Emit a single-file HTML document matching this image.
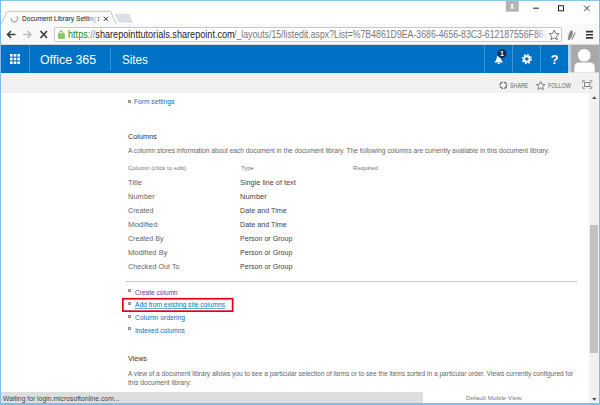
<!DOCTYPE html>
<html><head><meta charset="utf-8">
<style>
html,body{margin:0;padding:0;}
body{width:600px;height:405px;overflow:hidden;background:#fff;font-family:"Liberation Sans",sans-serif;position:relative;}
.abs{position:absolute;}
#toolbar{left:0;top:24px;width:600px;height:21px;background:#f9f9f9;}
#urlbox{left:53.500px;top:27px;width:508px;height:15px;background:#fff;border:1px solid #c8c8c8;border-radius:2px;box-sizing:border-box;}
#url{left:68px;top:28px;width:480px;overflow:hidden;font-size:10.5px;line-height:14px;color:#222;white-space:nowrap;}
#bluebar{left:0;top:45px;width:568px;height:27.5px;background:#0072c6;}
#ribbon{left:0;top:72.5px;width:600px;height:20px;background:#f1f1f1;}
.t{position:absolute;white-space:nowrap;transform-origin:0 50%;}
.bul{position:absolute;width:3.2px;height:3px;background:#e2e2e2;border:1px solid #8c8c8c;box-sizing:border-box;}
</style></head><body>
  <!-- tab strip -->
  <svg class="abs" style="left:0;top:0" width="600" height="25">
    <path d="M1,24.5 L6.500,12.300 Q7,11.300 8,11.300 L109.500,11.300 Q110.500,11.300 111,12.300 L116.500,24.500 L600,24.500 L600,25 L0,25 Z" fill="#f9f9f9"/>
    <path d="M1,24.500 L6.500,12.300 Q7,11.300 8,11.300 L109.500,11.300 Q110.500,11.300 111,12.300 L116.500,24.500 L600,24.500" fill="none" stroke="#bdbdbd" stroke-width="0.900"/>
    <path d="M115.300,14.200 L128.800,14.200 L132.400,22.200 L118.900,22.200 Z" fill="#dce0e6" stroke="#cdd2d8" stroke-width="0.600" stroke-linejoin="round"/>
    <path d="M11.100,18.300 A3.300 3.300 0 1 0 16.600,16.200" fill="none" stroke="#8a8a8a" stroke-width="1"/>
    <path d="M103.800,16.700 l4.200,4.200 m0,-4.200 l-4.200,4.200" stroke="#333" stroke-width="1" fill="none"/>
  </svg>
  <div class="abs" style="left:21.5px;top:12.500px;width:77px;height:12px;overflow:hidden;"><div style="font-size:7.700px;line-height:12px;color:#222;white-space:nowrap;transform:scaleX(0.860);transform-origin:0 50%;">Document Library Settings</div></div>
  <div class="abs" style="left:88px;top:12px;width:10px;height:12px;background:linear-gradient(90deg,rgba(249,249,249,0),#f9f9f9);"></div>
  <!-- window controls -->
  <svg class="abs" style="left:500px;top:0" width="100" height="24">
    <rect x="5.800" y="1" width="13" height="10.700" fill="#b4b4b4"/>
    <circle cx="12.100" cy="5.200" r="1.300" fill="#fff"/><path d="M9.600,8.600 Q12.100,5 14.600,8.600Z" fill="#fff"/>
    <path d="M33,8.200 h6" stroke="#222" stroke-width="1"/>
    <rect x="58.500" y="5.800" width="5" height="5" fill="none" stroke="#222" stroke-width="1"/>
    <path d="M84,5.500 l5.700,5.700 m0,-5.700 l-5.700,5.700" stroke="#222" stroke-width="0.900"/>
  </svg>
  <div class="abs" id="toolbar"></div>
  <svg class="abs" style="left:0;top:24px" width="600" height="21">
    <path d="M7.500,10.500 h8 M11,7 L7.500,10.500 L11,14" stroke="#3a3a3a" stroke-width="1.500" fill="none"/>
    <path d="M23,10.500 h8 M27.500,7 L31,10.500 L27.500,14" stroke="#bdbdbd" stroke-width="1.500" fill="none"/>
    <path d="M40.500,7 l6.500,7 m0,-7 l-6.500,7" stroke="#3a3a3a" stroke-width="1.600" fill="none"/>
  </svg>
  <div class="abs" style="left:0;top:44px;width:600px;height:1px;background:#d9d9d9;"></div>
  <div class="abs" id="urlbox"></div>
  <svg class="abs" style="left:56px;top:28px" width="12" height="14">
    <path d="M3.700,6 v-1.500 a1.600 1.600 0 0 1 3.200 0 v1.500" fill="none" stroke="#86c36a" stroke-width="1.100"/>
    <rect x="2.200" y="5.800" width="6.200" height="4.700" fill="#86cb62" stroke="#6bb04a" stroke-width="0.500"/>
  </svg>
  <!-- blue bar -->
  <div class="abs" id="bluebar"></div>
  <div class="abs" style="left:29px;top:45px;width:1px;height:27.500px;background:#3b93d4;"></div>
  <div class="abs" style="left:109.500px;top:48px;width:1px;height:21.500px;background:#3b93d4;"></div>
  <svg class="abs" style="left:10px;top:54px" width="11" height="11">
    <g fill="#fff"><rect x="0" y="0" width="2.600" height="2.600"/><rect x="3.700" y="0" width="2.600" height="2.600"/><rect x="7.400" y="0" width="2.600" height="2.600"/>
    <rect x="0" y="3.700" width="2.600" height="2.600"/><rect x="3.700" y="3.700" width="2.600" height="2.600"/><rect x="7.400" y="3.700" width="2.600" height="2.600"/>
    <rect x="0" y="7.400" width="2.600" height="2.600"/><rect x="3.700" y="7.400" width="2.600" height="2.600"/><rect x="7.400" y="7.400" width="2.600" height="2.600"/></g>
  </svg>
  <div class="abs" style="left:484px;top:45px;width:1px;height:27.500px;background:#3b93d4;"></div>
  <div class="abs" style="left:512px;top:45px;width:1px;height:27.500px;background:#3b93d4;"></div>
  <div class="abs" style="left:540px;top:45px;width:1px;height:27.500px;background:#3b93d4;"></div>
  <svg class="abs" style="left:484px;top:45px" width="116" height="27.500">
    <path d="M10.400,17.400 L12.500,14.600 Q12.500,10.600 14.700,10.600 Q16.900,10.600 16.900,14.600 L19,17.400 Z M13.600,18 h2.200 v1 h-2.200z" fill="#fff"/>
    <circle cx="17.900" cy="8.800" r="4.500" fill="#0a2a5c"/>
    <text x="17.900" y="11.300" font-size="7" font-weight="bold" fill="#fff" text-anchor="middle" font-family="Liberation Sans, sans-serif">1</text>
    <circle cx="42.800" cy="14" r="2.800" fill="none" stroke="#fff" stroke-width="2"/>
    <circle cx="42.800" cy="14" r="4.400" fill="none" stroke="#fff" stroke-width="1.500" stroke-dasharray="1.730 1.730"/>
    <text x="70.500" y="18.500" font-size="12.500" font-weight="bold" fill="#fff" text-anchor="middle" font-family="Liberation Sans, sans-serif">?</text>
    <rect x="84" y="0" width="3" height="27.500" fill="#b7d3e6"/>
    <rect x="87" y="0" width="29" height="27.500" fill="#a9a9a9"/>
    <circle cx="100.200" cy="10.300" r="6.300" fill="#fff"/>
    <path d="M90.400,27.500 v-5 q0,-5 5,-5 h10.300 q5,0 5,5 v5z" fill="#fff"/>
  </svg>
  <!-- ribbon -->
  <div class="abs" id="ribbon"></div>
  <svg class="abs" style="left:495px;top:77px" width="105" height="16">
    <circle cx="8.300" cy="8.300" r="3.300" fill="none" stroke="#555" stroke-width="1.200" stroke-dasharray="4 1.180"/>
    <path d="M45.700,4.400 l1.300,2.850 3,.3 -2.300,2 .65,3 -2.650,-1.550 -2.650,1.550 .65,-3 -2.300,-2 3,-.3z" fill="none" stroke="#666" stroke-width="0.800"/>
    <path d="M87.700,5.700 v-2 h2.300 M94.500,3.700 h2.300 v2 M96.800,9.300 v2 h-2.300 M90,11.300 h-2.300 v-2" fill="none" stroke="#777" stroke-width="0.800"/>
    <rect x="89.600" y="5.600" width="5.300" height="3.800" fill="none" stroke="#666" stroke-width="0.800"/>
  </svg>
  <!-- scrollbar -->
  <div class="abs" style="left:589px;top:92.500px;width:10px;height:311px;background:#f1f1f1;"></div>
  <div class="abs" style="left:590.400px;top:224.800px;width:7.700px;height:128.700px;background:#c1c1c1;"></div>
  <svg class="abs" style="left:589px;top:93px" width="10" height="311">
    <path d="M3,6 l2.300,-2.800 2.300,2.800z" fill="#505050"/>
    <path d="M3,305 l2.300,2.800 2.300,-2.800z" fill="#505050"/>
  </svg>
  <!-- content -->
  <div class="bul" style="left:128.200px;top:99.800px;"></div>
  <div class="abs" style="left:125.500px;top:281px;width:451.200px;height:1px;background:#c6c6c6;"></div>
  <div class="bul" style="left:128.200px;top:289px;"></div>
  <div class="bul" style="left:128.200px;top:302px;"></div>
  <div class="bul" style="left:128.200px;top:314.600px;"></div>
  <div class="bul" style="left:128.200px;top:327.400px;"></div>
  <svg class="abs" style="left:120px;top:296px" width="116" height="18"><rect x="2.850" y="2.750" width="109.800" height="12.400" fill="none" stroke="#e60012" stroke-width="1.700"/></svg>
  <div class="abs" style="left:126px;top:392px;width:297px;height:11px;background:#dedede;"></div>
  <!-- status bar -->
  <div class="abs" style="left:0;top:392px;width:246px;height:11px;background:#dedede;"></div>
<div class="t" style="left:134.10px;top:97.01px;font-size:7.2px;line-height:10px;color:#0072c6;transform:scaleX(0.9249);">Form settings</div>
<div class="t" style="left:127.56px;top:130.53px;font-size:8px;line-height:11px;color:#333;transform:scaleX(0.9141);">Columns</div>
<div class="t" style="left:127.60px;top:145.99px;font-size:6.8px;line-height:10px;color:#666;transform:scaleX(0.9712);">A column stores information about each document in the document library. The following columns are currently available in this document library:</div>
<div class="t" style="left:128.13px;top:162.85px;font-size:6.2px;line-height:9px;color:#777;transform:scaleX(1.0067);">Column (click to edit)</div>
<div class="t" style="left:240.65px;top:162.85px;font-size:6.2px;line-height:9px;color:#777;transform:scaleX(0.9440);">Type</div>
<div class="t" style="left:352.63px;top:162.85px;font-size:6.2px;line-height:9px;color:#777;transform:scaleX(0.9898);">Required</div>
<div class="t" style="left:127.55px;top:177.71px;font-size:7.2px;line-height:10px;color:#666;transform:scaleX(1.0349);">Title</div>
<div class="t" style="left:240.26px;top:177.71px;font-size:7.2px;line-height:10px;color:#444;transform:scaleX(1.0188);">Single line of text</div>
<div class="t" style="left:127.55px;top:191.71px;font-size:7.2px;line-height:10px;color:#666;transform:scaleX(1.0469);">Number</div>
<div class="t" style="left:240.25px;top:191.71px;font-size:7.2px;line-height:10px;color:#444;transform:scaleX(1.0469);">Number</div>
<div class="t" style="left:127.57px;top:205.71px;font-size:7.2px;line-height:10px;color:#666;transform:scaleX(0.9961);">Created</div>
<div class="t" style="left:240.27px;top:205.71px;font-size:7.2px;line-height:10px;color:#444;transform:scaleX(1.0006);">Date and Time</div>
<div class="t" style="left:127.53px;top:219.71px;font-size:7.2px;line-height:10px;color:#666;transform:scaleX(1.0849);">Modified</div>
<div class="t" style="left:240.27px;top:219.71px;font-size:7.2px;line-height:10px;color:#444;transform:scaleX(1.0006);">Date and Time</div>
<div class="t" style="left:127.57px;top:233.71px;font-size:7.2px;line-height:10px;color:#666;transform:scaleX(0.9863);">Created By</div>
<div class="t" style="left:240.27px;top:233.71px;font-size:7.2px;line-height:10px;color:#444;transform:scaleX(0.9856);">Person or Group</div>
<div class="t" style="left:127.55px;top:247.71px;font-size:7.2px;line-height:10px;color:#666;transform:scaleX(1.0510);">Modified By</div>
<div class="t" style="left:240.27px;top:247.71px;font-size:7.2px;line-height:10px;color:#444;transform:scaleX(0.9856);">Person or Group</div>
<div class="t" style="left:127.57px;top:261.71px;font-size:7.2px;line-height:10px;color:#666;transform:scaleX(1.0014);">Checked Out To</div>
<div class="t" style="left:240.27px;top:261.71px;font-size:7.2px;line-height:10px;color:#444;transform:scaleX(0.9856);">Person or Group</div>
<div class="t" style="left:134.60px;top:287.51px;font-size:7.2px;line-height:10px;color:#663399;transform:scaleX(0.9150);">Create column</div>
<div class="t" style="left:134.60px;top:300.26px;font-size:7.2px;line-height:10px;color:#0072c6;transform:scaleX(0.9235);text-decoration:underline;text-decoration-thickness:0.7px;text-decoration-color:rgba(0,114,198,0.6);text-underline-offset:0.8px;">Add from existing site columns</div>
<div class="t" style="left:134.59px;top:313.01px;font-size:7.2px;line-height:10px;color:#0072c6;transform:scaleX(0.9414);">Column ordering</div>
<div class="t" style="left:134.60px;top:325.76px;font-size:7.2px;line-height:10px;color:#0072c6;transform:scaleX(0.9160);">Indexed columns</div>
<div class="t" style="left:127.57px;top:352.53px;font-size:8px;line-height:11px;color:#333;transform:scaleX(0.8897);">Views</div>
<div class="t" style="left:127.61px;top:368.99px;font-size:6.8px;line-height:10px;color:#666;transform:scaleX(0.9663);">A view of a document library allows you to see a particular selection of items or to see the items sorted in a particular order. Views currently configured for</div>
<div class="t" style="left:127.60px;top:377.99px;font-size:6.8px;line-height:10px;color:#666;transform:scaleX(0.9818);">this document library:</div>
<div class="t" style="left:465.62px;top:392.85px;font-size:6.2px;line-height:9px;color:#777;transform:scaleX(1.0200);">Default Mobile View</div>
<div class="t" style="left:2.59px;top:394.11px;font-size:7.2px;line-height:10px;color:#444;transform:scaleX(0.9457);">Waiting for login.microsoftonline.com...</div>
<div class="t" style="left:510.38px;top:80.75px;font-size:6.5px;line-height:9px;color:#666;transform:scaleX(0.8168);">SHARE</div>
<div class="t" style="left:547.67px;top:80.75px;font-size:6.5px;line-height:9px;color:#666;transform:scaleX(0.8342);">FOLLOW</div>
<div class="t" style="left:40.06px;top:50.50px;font-size:13px;line-height:18px;color:#fff;transform:scaleX(0.9504);">Office 365</div>
<div class="t" style="left:122.00px;top:50.50px;font-size:13px;line-height:18px;color:#fff;transform:scaleX(0.8961);">Sites</div>
<div class="t" style="left:68.45px;top:27.16px;font-size:10.8px;line-height:15px;color:#222;transform:scaleX(0.8440);"><span style="color:#1a8a1a">https</span><span style="color:#888">://</span>sharepointtutorials.sharepoint.com</div>
<div class="t" style="left:234.48px;top:27.16px;font-size:10.8px;line-height:15px;color:#777;transform:scaleX(0.8091);">/_layouts/15/listedit.aspx?List=%7B4861D9EA-3686-4656-83C3-612187556F869</div>
  <div class="abs" style="left:536px;top:29px;width:13px;height:12px;background:linear-gradient(90deg,rgba(255,255,255,0),#fff 90%);"></div>
  <svg class="abs" style="left:545px;top:26px" width="55" height="18">
    <path d="M9.100,4.200 l1.500,3.300 3.500,.35 -2.650,2.350 .8,3.500 -3.150,-1.850 -3.150,1.850 .8,-3.500 -2.650,-2.350 3.500,-.35z" fill="none" stroke="#777" stroke-width="1"/>
    <ellipse cx="25.600" cy="8.600" rx="1.900" ry="4.300" transform="rotate(18 25.600 8.600)" fill="#8a8a8a"/>
    <circle cx="24" cy="12.700" r="1.300" fill="#8a8a8a"/>
    <path d="M26.800,13.500 L30.300,6.600" stroke="#8a8a8a" stroke-width="1.100" fill="none"/>
    <path d="M41,5.600 h7 M41,8.750 h7 M41,11.900 h7" stroke="#333" stroke-width="1.700"/>
  </svg>
  <!-- window borders -->
  <div class="abs" style="left:0;top:0;width:600px;height:1px;background:#8cc4ea;"></div>
  <div class="abs" style="left:0;top:0;width:1.300px;height:405px;background:#7fbde8;"></div>
  <div class="abs" style="left:598.500px;top:0;width:1.500px;height:405px;background:#7fbde8;"></div>
  <div class="abs" style="left:0;top:403px;width:600px;height:2px;background:#7fbde8;"></div>
</body></html>
